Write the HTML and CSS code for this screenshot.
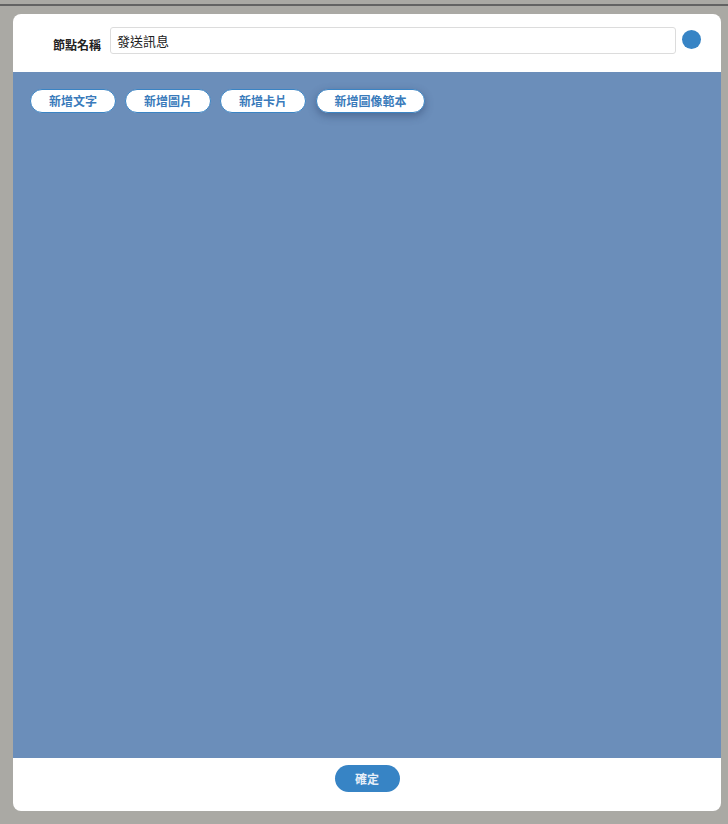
FILE: index.html
```html
<!DOCTYPE html>
<html lang="zh-Hant">
<head>
<meta charset="utf-8">
<link rel="stylesheet" href="styles.css">
</head>
<body>
<div class="topline"></div>
<div class="modal">
  <div class="header">
    <label class="label">節點名稱</label>
    <input class="name-input" type="text" value="發送訊息">
    <span class="dot"></span>
  </div>
  <div class="canvas">
    <div class="toolbar">
      <button class="pill">新增文字</button>
      <button class="pill">新增圖片</button>
      <button class="pill">新增卡片</button>
      <button class="pill pill-wide pill-shadow">新增圖像範本</button>
    </div>
  </div>
  <div class="footer">
    <button class="confirm">確定</button>
  </div>
</div>
</body>
</html>
```
FILE: styles.css
```css
html, body {
  margin: 0;
  padding: 0;
  background: #aaa9a4;
  font-family: "Noto Sans CJK TC", "Noto Sans", sans-serif;
}
body {
  width: 728px;
  height: 824px;
  overflow: hidden;
  padding-top: 4px;
  box-sizing: border-box;
}
.topline {
  height: 2px;
  background: #636363;
}
.modal {
  margin: 8px 7px 0 13px;
  width: 708px;
  height: 797px;
  background: #fff;
  border-radius: 8px;
  display: flex;
  flex-direction: column;
  overflow: hidden;
}
.header {
  height: 58px;
  display: flex;
  align-items: center;
  padding: 0 20px 0 0;
  box-sizing: border-box;
  flex-shrink: 0;
}
.label {
  width: 88px;
  text-align: right;
  font-size: 12px;
  font-weight: 700;
  color: #222;
  margin-top: 3px;
}
.name-input {
  margin-left: 9px;
  width: 566px;
  height: 27px;
  box-sizing: border-box;
  border: 1px solid #dcdcdc;
  border-radius: 3px;
  padding: 0 6px;
  font-family: "Noto Sans CJK TC", "Noto Sans", sans-serif;
  font-size: 13px;
  color: #222;
  outline: none;
  margin-top: -5px;
}
.dot {
  width: 19px;
  height: 19px;
  border-radius: 50%;
  background: #3784c5;
  margin-left: 6px;
  margin-top: -7px;
}
.canvas {
  flex: 1;
  background: #6b8eba;
  padding: 17px 0 0 17px;
}
.toolbar {
  display: flex;
  gap: 9px;
}
.pill {
  height: 24px;
  width: 86px;
  box-sizing: border-box;
  border: 1px solid #3a84c4;
  background: #fff;
  border-radius: 12px;
  color: #3a7bbb;
  font-family: "Noto Sans CJK TC", "Noto Sans", sans-serif;
  font-size: 12px;
  font-weight: 600;
  padding: 0;
  line-height: 22px;
}
.pill-wide {
  width: 109px;
  margin-left: 1px;
}
.pill-shadow {
  box-shadow: 0 3px 8px rgba(40, 60, 100, 0.45);
}
.footer {
  height: 53px;
  flex-shrink: 0;
  display: flex;
  justify-content: center;
  padding-top: 7px;
  box-sizing: border-box;
}
.confirm {
  width: 65px;
  height: 27px;
  border: none;
  border-radius: 14px;
  background: #3784c5;
  color: #e6eef8;
  font-family: "Noto Sans CJK TC", "Noto Sans", sans-serif;
  font-size: 12px;
  font-weight: 700;
  padding: 0;
}
```
